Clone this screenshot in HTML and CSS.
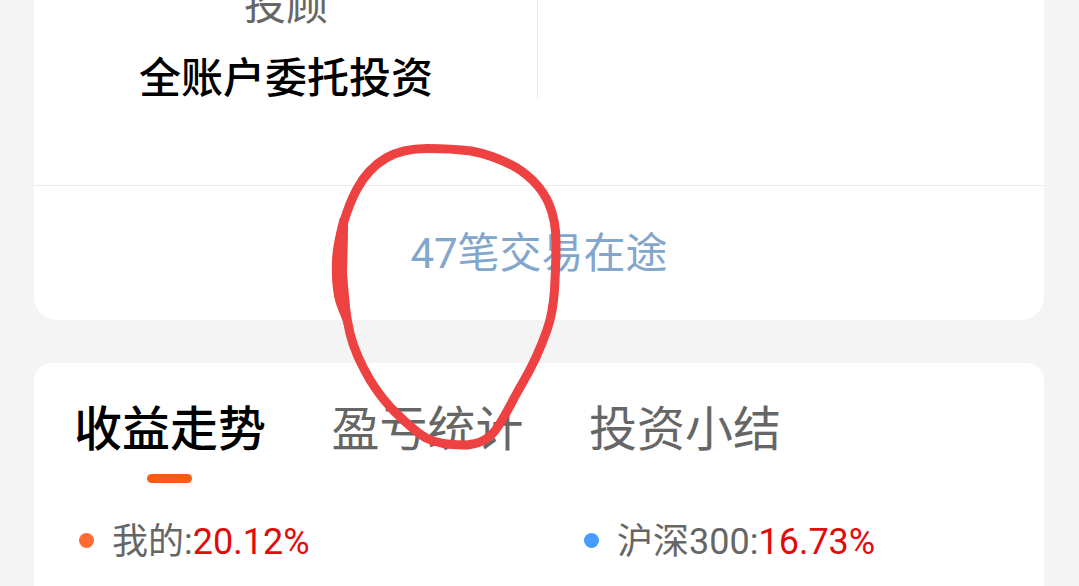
FILE: index.html
```html
<!DOCTYPE html>
<html lang="zh-CN">
<head>
  <meta charset="UTF-8">
  <meta name="viewport" content="width=device-width, initial-scale=1.0">
  <title>收益走势</title>
  <link rel="stylesheet" href="styles.css">
</head>
<body>
  <main class="page">
    <section class="card account">
      <div class="account-grid">
        <div class="account-item">
          <div class="account-label">投顾</div>
          <div class="account-name">全账户委托投资</div>
        </div>
        <div class="account-item"></div>
      </div>
      <a class="pending">47笔交易在途</a>
    </section>

    <section class="card profit">
      <nav class="tabs">
        <a class="tab active">收益走势</a>
        <a class="tab">盈亏统计</a>
        <a class="tab">投资小结</a>
      </nav>
      <div class="legend">
        <div class="legend-item">
          <span class="dot orange"></span>
          <span class="legend-text">我的:<span class="value">20.12%</span></span>
        </div>
        <div class="legend-item">
          <span class="dot blue"></span>
          <span class="legend-text">沪深300:<span class="value">16.73%</span></span>
        </div>
      </div>
    </section>
  </main>

  <!-- hand-drawn circle -->
  <svg class="mark" width="1079" height="586" viewBox="0 0 1079 586">
    <path class="mark-line" d="M343.500 223C347 211 351 200 357 189C364 176 374 165 386 158C398 151 412 148.500 427 148.500C442 148.500 456 149 471 151C487 154 503 160 517 168C531 177 543 190 549 204C554 216 556 228 556 242C556 258 555.500 274 554.500 290C553.500 304 552 316 547 330C540 350 532 367 522 384C513 399 506 415 497 428C489 440 478 445 463 445C450 445 438 444 426 438C414 431 403 420 392 409C380 396 371 383 364 369C356 354 350 338 347.500 321C344 303 342.500 286 342.500 270C342.500 254 343 238 343.500 223Z"/>
    <path class="mark-fill" d="M340 217C337 229 333 244 332 260C331.500 272 332 284 334 296C336 307 341 315 344 325L351 318L347 275L348 225Z"/>
  </svg>
</body>
</html>
```
FILE: styles.css
```css
* {
  box-sizing: border-box;
}
body {
  margin: 0;
  height: 586px;
  overflow: hidden;
  background: #f4f4f4;
  font-family: Roboto, "Noto Sans CJK SC", sans-serif;
  color: #666;
}
.page {
  display: flex;
  flex-direction: column;
  gap: 43px;
  padding: 0 35px 0 34px;
}
.card {
  background: #fff;
}
.account {
  height: 320px;
  border-radius: 0 0 23px 23px;
}
.account-grid {
  display: grid;
  grid-template-columns: 504px 1fr;
  height: 186px;
  padding-bottom: 87px;
  border-bottom: 1px solid #ebebeb;
}
.account-item {
  display: flex;
  flex-direction: column;
  justify-content: flex-end;
  align-items: center;
  height: 99px;
  padding-left: 1px;
  font-size: 42px;
  line-height: 60px;
}
.account-item:first-child {
  border-right: 1px solid #ebebeb;
}
.account-label {
  margin-bottom: 13px;
}
.account-name {
  color: #000;
  font-weight: 500;
  margin-bottom: -10px;
}
.pending {
  display: flex;
  align-items: center;
  justify-content: center;
  height: 134px;
  padding-bottom: 7px;
  font-size: 42px;
  color: #82a6cc;
}
.profit {
  height: 223px;
  padding: 32px 40px 0;
  border-radius: 18px 18px 0 0;
}
.tabs {
  display: flex;
  gap: 65.5px;
  height: 90px;
  font-size: 48px;
  line-height: 70px;
}
.tab.active {
  color: #000;
  font-weight: 500;
}
.tab.active::after {
  content: "";
  display: block;
  width: 45px;
  height: 9px;
  margin: 9px auto 0;
  border-radius: 5px;
  background: #fd5a14;
  transform: translateX(-1px);
}
.legend {
  display: grid;
  grid-template-columns: 505px 1fr;
  margin-top: 28px;
  padding-left: 5px;
  font-size: 36px;
  line-height: 54px;
}
.legend-item {
  display: flex;
  align-items: center;
  gap: 18px;
}
.legend-text {
  padding-top: 2px;
  margin-bottom: -2px;
}
.dot {
  width: 15px;
  height: 15px;
  border-radius: 50%;
}
.orange {
  background: #ff6a33;
}
.blue {
  background: #479cff;
}
.value {
  color: #e10b0b;
}
.mark {
  position: absolute;
  top: 0;
  left: 0;
  pointer-events: none;
}
.mark-line {
  fill: none;
  stroke: #ee4141;
  stroke-width: 9;
  stroke-linejoin: round;
}
.mark-fill {
  fill: #ee4141;
}
```
